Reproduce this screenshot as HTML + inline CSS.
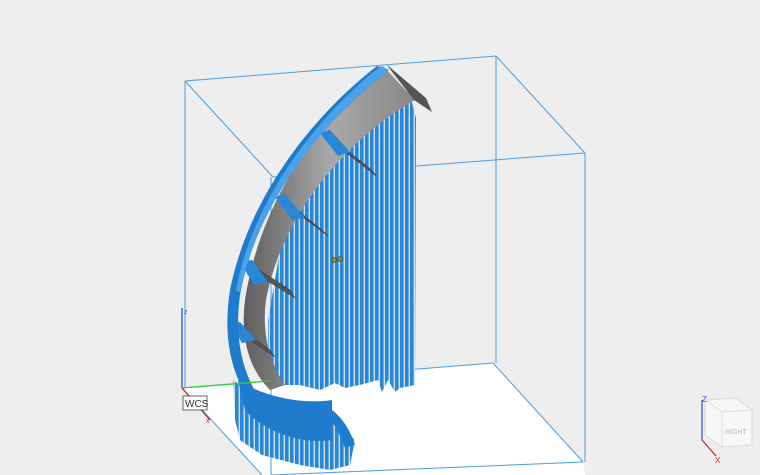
<!DOCTYPE html>
<html><head><meta charset="utf-8"><style>
html,body{margin:0;padding:0;background:#eeeeee;width:760px;height:475px;overflow:hidden}
svg{display:block}
text{font-family:"Liberation Sans",sans-serif}
</style></head><body>
<svg width="760" height="475" viewBox="0 0 760 475" xmlns="http://www.w3.org/2000/svg">
<defs>
<pattern id="st" width="5" height="10" patternUnits="userSpaceOnUse">
<rect width="5" height="10" fill="#cfe2f3"/>
<rect x="0" width="3.6" height="10" fill="#2a86d6"/>
</pattern>
<linearGradient id="gr" x1="0" y1="0" x2="1" y2="0">
<stop offset="0" stop-color="#5e5e5e"/><stop offset="0.5" stop-color="#a8a8a8"/><stop offset="1" stop-color="#888"/>
</linearGradient>
</defs>
<polygon points="182,388 493,363 583,462 585,475 262,475" fill="#ffffff"/>
<g stroke="#4a9de0" stroke-width="1" fill="none">
<polyline points="185,81 496,56 496,363"/>
<line x1="185" y1="81" x2="185" y2="388"/>
<line x1="182" y1="388" x2="493" y2="363"/>
<line x1="185" y1="81" x2="273" y2="177"/>
<line x1="496" y1="56" x2="585" y2="153"/>
<line x1="493" y1="363" x2="583" y2="462"/>
<line x1="273" y1="177" x2="585" y2="153"/>
<line x1="585" y1="153" x2="585" y2="462"/>
<line x1="271" y1="177" x2="271" y2="475"/>
<line x1="271" y1="475" x2="583" y2="462"/>
<line x1="182" y1="388" x2="262" y2="475"/>
</g>
<!-- fringe -->
<path d="M268,320 L280,250 L300,200 L330,150 L370,112 L410,95 L416,118 L415,385 L400,388 L395,392 L388,380 L382,392 L378,380 L360,385 L345,388 L335,383 L320,390 L300,385 L285,385 L268,375 Z" fill="url(#st)"/>
<path d="M233,380 L260,400 L330,415 L355,440 L350,465 L330,470 L300,465 L262,455 L240,440 L235,420 Z" fill="url(#st)"/>
<!-- gray inner surface -->
<path d="M383,66 C330,110 262,190 245,300 C240,340 250,370 270,390 L285,385 C268,360 262,330 266,300 C282,215 345,140 415,100 Z" fill="url(#gr)"/>
<path d="M386,64 L426,98 L432,112 L414,100 Z" fill="#555"/>
<g fill="#555" stroke="#333" stroke-width="0.5">
<polygon points="325,133 372,170 376,176 330,140"/>
<polygon points="280,196 322,230 328,236 285,204"/>
<polygon points="247,262 290,290 295,298 250,270"/>
<polygon points="233,323 270,350 275,357 236,330"/>
</g>
<g fill="#2a86d6">
<polygon points="320,133 330,130 350,152 338,156"/>
<polygon points="275,197 285,194 305,218 292,220"/>
<polygon points="240,262 252,260 268,282 254,285"/>
<polygon points="230,324 240,322 256,340 242,343"/>
</g>
<path d="M377,66 C320,110 250,190 230,290 C222,340 232,385 262,415 L270,412 C242,380 234,340 240,295 C258,195 328,118 389,70 Z" fill="#1f7ccc"/>
<path d="M381,66 C325,110 255,190 236,290 L240,292 C260,195 330,115 389,70 Z" fill="#4aa3ea"/>
<path d="M238,380 C260,395 300,405 332,400 L332,440 C300,445 262,430 245,410 Z" fill="#1f7ccc"/>
<path d="M332,410 C345,420 352,435 355,445 L345,448 C340,435 335,425 330,420 Z" fill="#1f7ccc"/>
<circle cx="334" cy="260" r="2.5" fill="#9a8a20" stroke="#333" stroke-width="0.6"/>
<circle cx="340" cy="259" r="2.5" fill="#9a8a20" stroke="#333" stroke-width="0.6"/>
<line x1="182" y1="388" x2="182" y2="308" stroke="#2a4fd0" stroke-width="1.3"/>
<text x="184" y="314" font-size="7" fill="#2a4fd0">z</text>
<line x1="182" y1="388" x2="270" y2="381" stroke="#33cc33" stroke-width="1.3"/>
<line x1="182" y1="388" x2="210" y2="420" stroke="#cc2222" stroke-width="1.3"/>
<text x="206" y="423" font-size="7" fill="#cc2222">x</text>
<rect x="183" y="396" width="24" height="14" fill="#fafafa" stroke="#444" stroke-width="0.8"/>
<text x="185" y="407" font-size="10" fill="#333">WCS</text>
<g stroke="#d8d8d8" fill="#f7f7f7" stroke-width="1">
<polygon points="705,400 735,398 752,410 752,445 722,447 705,435"/>
</g>
<polyline points="705,400 722,412 752,410" stroke="#dcdcdc" fill="none"/>
<line x1="722" y1="412" x2="722" y2="447" stroke="#dcdcdc"/>
<text x="725" y="434" font-size="7" fill="#bbb">RIGHT</text>
<line x1="702" y1="400" x2="702" y2="440" stroke="#3355cc" stroke-width="1.2"/>
<text x="702" y="402" font-size="8" fill="#3355cc">Z</text>
<line x1="702" y1="440" x2="716" y2="456" stroke="#cc2222" stroke-width="1.2"/>
<text x="715" y="463" font-size="8" fill="#cc2222">X</text>
</svg>
</body></html>
